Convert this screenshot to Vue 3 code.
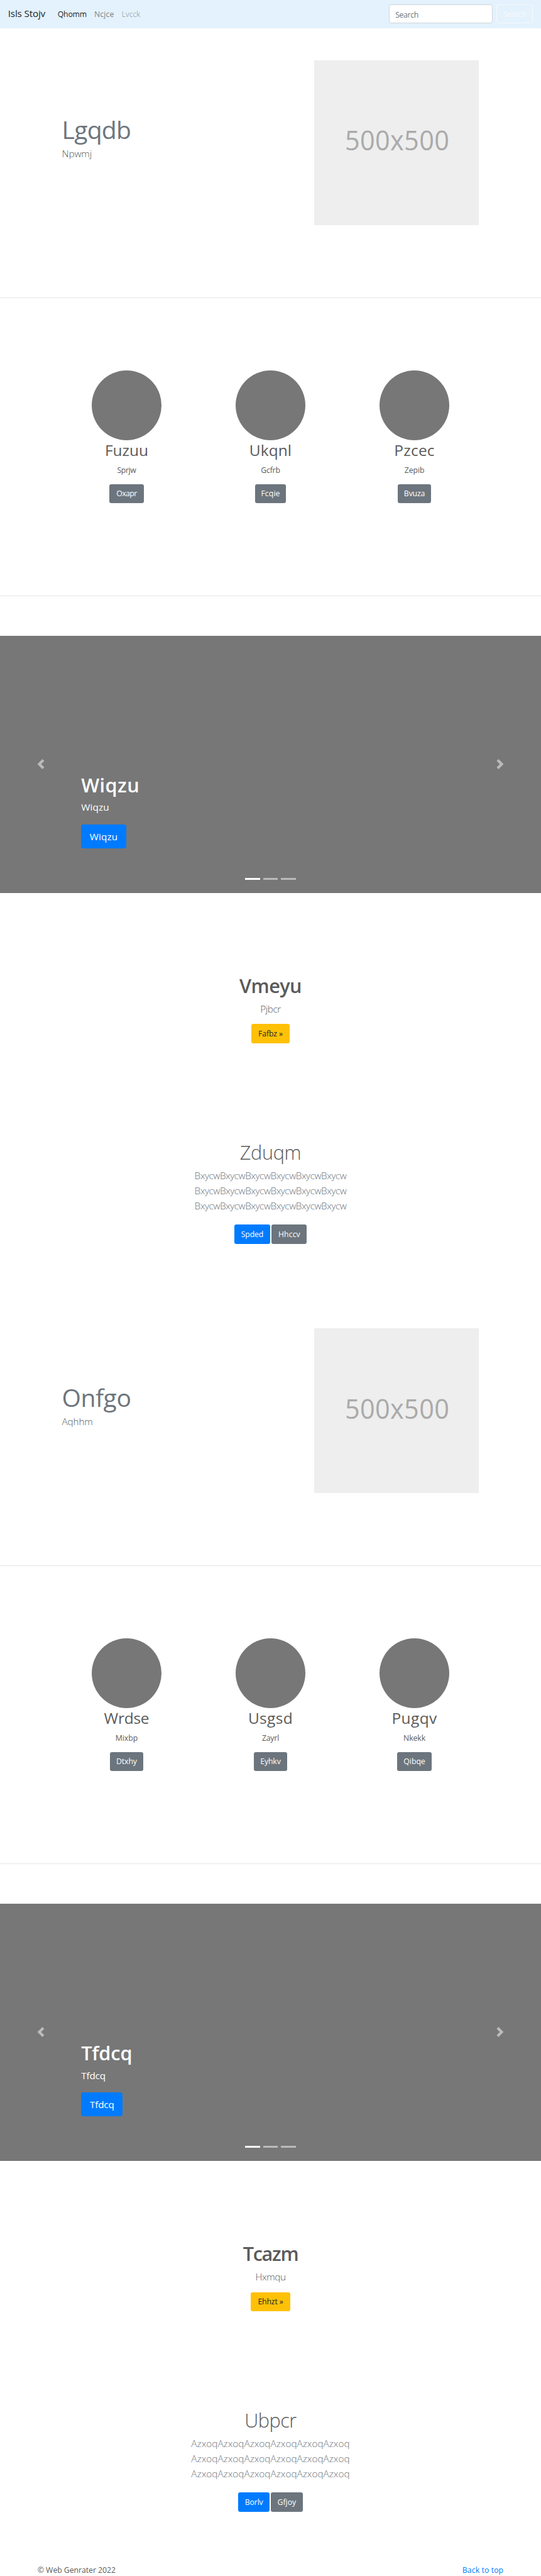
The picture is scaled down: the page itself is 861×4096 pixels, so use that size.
<script setup>
// Each label carries the width its glyphs should span; tracking is adjusted to reach it.
const vFit = {
  mounted(el, { value }) {
    const text = el.textContent.trim()
    const ctx = document.createElement('canvas').getContext('2d')
    const cs = getComputedStyle(el)
    ctx.font = `${cs.fontWeight} ${parseFloat(cs.fontSize)}px ${cs.fontFamily}`
    const m = ctx.measureText(text)
    const ink = m.actualBoundingBoxLeft + m.actualBoundingBoxRight
    el.style.letterSpacing = `${((value - ink) / (text.length - 1)).toFixed(3)}px`
  },
}

const links = [
  { text: 'Qhomm', w: 57, kind: 'active' },
  { text: 'Ncjce', w: 38, kind: 'normal' },
  { text: 'Lvcck', w: 36.5, kind: 'disabled' },
]

const sections = [
  {
    hero: { title: 'Lgqdb', tw: 132.5, lead: 'Npwmj', lw: 57.5 },
    cards: [
      { title: 'Fuzuu', tw: 81.5, sub: 'Sprjw', sw: 38, btn: 'Oxapr', w: 69, bw: 42 },
      { title: 'Ukqnl', tw: 80.5, sub: 'Gcfrb', sw: 38, btn: 'Fcqie', w: 62, bw: 36 },
      { title: 'Pzcec', tw: 77, sub: 'Zepib', sw: 39.5, btn: 'Bvuza', w: 67, bw: 40.5 },
    ],
    slide: { text: 'Wiqzu', tw: 113.5, w: 55, bw: 90 },
    promo: { title: 'Vmeyu', tw: 122.5, lead: 'Pjbcr', lw: 41, btn: 'Fafbz »', w: 76, bw: 48.5 },
    album: {
      title: 'Zduqm', tw: 119, line: 'Bxycw', lw: 303,
      a: 'Spded', aw: 72, atw: 44, b: 'Hhccv', bw: 70, btw: 43,
    },
  },
  {
    hero: { title: 'Onfgo', tw: 134, lead: 'Aqhhm', lw: 61 },
    cards: [
      { title: 'Wrdse', tw: 89, sub: 'Mixbp', sw: 43, btn: 'Dtxhy', w: 67, bw: 40.5 },
      { title: 'Usgsd', tw: 85, sub: 'Zayrl', sw: 33.5, btn: 'Eyhkv', w: 66, bw: 40 },
      { title: 'Pugqv', tw: 87.5, sub: 'Nkekk', sw: 43, btn: 'Qibqe', w: 69, bw: 42.5 },
    ],
    slide: { text: 'Tfdcq', tw: 99, w: 48, bw: 83 },
    promo: { title: 'Tcazm', tw: 109, lead: 'Hxmqu', lw: 58.5, btn: 'Ehhzt »', w: 78, bw: 50 },
    album: {
      title: 'Ubpcr', tw: 101, line: 'Azxoq', lw: 315,
      a: 'Borlv', aw: 62, atw: 35.5, b: 'Gfjoy', bw: 63, btw: 37.5,
    },
  },
]
</script>

<template>
  <div class="page">
    <header class="navbar">
      <a class="brand"><span v-fit="74">Isls Stojv</span></a>
      <nav class="links">
        <a v-for="l in links" :key="l.text" :class="['link', l.kind]"><span v-fit="l.w">{{ l.text }}</span></a>
      </nav>
      <form class="search">
        <div class="field"><span v-fit="46">Search</span></div>
        <div class="go"><span v-fit="46">Search</span></div>
      </form>
    </header>

    <section v-for="s in sections" :key="s.hero.title" class="block">
      <div class="hero">
        <div class="hero-text">
          <h2><span v-fit="s.hero.tw">{{ s.hero.title }}</span></h2>
          <p class="lead"><span v-fit="s.hero.lw">{{ s.hero.lead }}</span></p>
        </div>
        <div class="placeholder"><span v-fit="215">500x500</span></div>
      </div>
      <div class="rule"></div>

      <div class="cards">
        <div v-for="c in s.cards" :key="c.title" class="card">
          <div class="circle"></div>
          <h3><span v-fit="c.tw">{{ c.title }}</span></h3>
          <p><span v-fit="c.sw">{{ c.sub }}</span></p>
          <a class="btn gray" :style="{ width: c.w + 'px' }"><span v-fit="c.bw">{{ c.btn }}</span></a>
        </div>
      </div>
      <div class="rule"></div>

      <div class="carousel">
        <svg class="arrow prev" viewBox="0 0 8 8"><path d="M5.25 0l-4 4 4 4 1.5-1.5-2.5-2.5 2.5-2.5-1.5-1.5z" /></svg>
        <svg class="arrow next" viewBox="0 0 8 8"><path d="M2.75 0l-1.5 1.5 2.5 2.5-2.5 2.5 1.5 1.5 4-4-4-4z" /></svg>
        <div class="caption">
          <h1><span v-fit="s.slide.tw">{{ s.slide.text }}</span></h1>
          <p><span v-fit="s.slide.w">{{ s.slide.text }}</span></p>
          <a class="btn large blue" :style="{ width: s.slide.bw + 'px' }"><span v-fit="s.slide.w">{{ s.slide.text }}</span></a>
        </div>
        <div class="dots"><i class="on"></i><i></i><i></i></div>
      </div>

      <div class="promo">
        <h1><span v-fit="s.promo.tw">{{ s.promo.title }}</span></h1>
        <p class="lead"><span v-fit="s.promo.lw">{{ s.promo.lead }}</span></p>
        <a class="btn yellow" :style="{ width: s.promo.w + 'px' }"><span v-fit="s.promo.bw">{{ s.promo.btn }}</span></a>
      </div>

      <div class="album">
        <h1><span v-fit="s.album.tw">{{ s.album.title }}</span></h1>
        <p v-for="n in 3" :key="n" class="lead muted"><span v-fit="s.album.lw">{{ s.album.line.repeat(6) }}</span></p>
        <div class="actions">
          <a class="btn blue" :style="{ width: s.album.aw + 'px' }"><span v-fit="s.album.atw">{{ s.album.a }}</span></a>
          <a class="btn gray" :style="{ width: s.album.bw + 'px' }"><span v-fit="s.album.btw">{{ s.album.b }}</span></a>
        </div>
      </div>
    </section>

    <footer class="footer">
      <span v-fit="155">© Web Genrater 2022</span>
      <a><span v-fit="80.5">Back to top</span></a>
    </footer>
  </div>
</template>

<style>
body {
  margin: 0;
  background: #fff;
}
</style>

<style scoped>
.page {
  zoom: 0.7975;
  font-family: "Open Sans", "Noto Sans", sans-serif;
  font-size: 15.4px;
  line-height: 24px;
  color: #5a5a5a;
  height: 5136px;
  overflow: hidden;
}
.page * {
  box-sizing: border-box;
}
h1, h2, h3, p {
  margin: 0;
  font-weight: 400;
}
span {
  white-space: nowrap;
}
.navbar {
  height: 56px;
  background: #e3f2fd;
  display: flex;
  align-items: center;
  padding: 0 16px;
}
.brand {
  width: 99px;
  font-size: 19.2px;
  line-height: 30px;
  color: rgba(0, 0, 0, 0.9);
}
.links {
  display: flex;
  gap: 15px;
}
.link.active {
  color: rgba(0, 0, 0, 0.9);
}
.link.normal {
  color: rgba(0, 0, 0, 0.5);
}
.link.disabled {
  color: rgba(0, 0, 0, 0.3);
}
.search {
  margin-left: auto;
  display: flex;
  gap: 8px;
}
.field,
.go {
  height: 38px;
  border-radius: 4px;
  padding: 7px 12px 0;
  border: 1px solid #ced4da;
}
.field {
  width: 207px;
  background: #fff;
  color: #6c757d;
}
.go {
  width: 73px;
  border-color: #f8f9fa;
  color: #f8f9fa;
  padding-top: 6px;
}
.block {
  height: 2528px;
  padding-top: 64px;
}
.hero {
  height: 473px;
  display: flex;
  justify-content: space-between;
  padding: 0 123.6px 0 123.5px;
}
.hero-text {
  padding-top: 113px;
}
.hero h2 {
  font-size: 49px;
  line-height: 50px;
  color: #6c757d;
}
.lead {
  font-size: 19.2px;
  line-height: 30px;
  font-weight: 300;
}
.hero .lead {
  margin-top: 9px;
}
.placeholder {
  width: 329px;
  height: 329px;
  background: #eee;
  color: #aaa;
  font-size: 55px;
  display: flex;
  align-items: center;
  justify-content: center;
  padding: 0 0 9.6px 2px;
}
.placeholder span {
  transform: scaleX(0.944);
}
.rule {
  height: 1px;
  background: #e5e5e5;
}
.cards {
  height: 593px;
  padding: 144px 109px 0;
  display: grid;
  grid-template-columns: repeat(3, 1fr);
}
.card {
  display: flex;
  flex-direction: column;
  align-items: center;
}
.circle {
  width: 140px;
  height: 140px;
  border-radius: 50%;
  background: #777;
}
.card h3 {
  margin-top: 1px;
  font-size: 30.7px;
  line-height: 38px;
}
.card p {
  margin-top: 8.5px;
}
.card .btn {
  margin-top: 15.5px;
}
.btn {
  height: 38px;
  border-radius: 4px;
  display: flex;
  align-items: center;
  justify-content: center;
  color: #fff;
}
.gray {
  background: #6c757d;
}
.blue {
  background: #007bff;
}
.yellow {
  background: #ffc107;
  color: #212529;
}
.large {
  height: 48px;
  border-radius: 5px;
  font-size: 19.2px;
  font-weight: 500;
}
.carousel {
  position: relative;
  margin-top: 80px;
  height: 512px;
  background: #777;
  color: #fff;
}
.arrow {
  position: absolute;
  top: 246px;
  width: 20px;
  height: 20px;
  fill: #fff;
  opacity: 0.5;
}
.prev {
  left: 71px;
}
.next {
  right: 71px;
}
.caption {
  position: absolute;
  left: 162px;
  top: 273px;
}
.caption h1 {
  font-size: 38.4px;
  line-height: 48px;
  font-weight: 600;
}
.caption p {
  margin: 6.6px 0 18.4px;
  font-size: 19.2px;
  line-height: 30px;
  font-weight: 500;
}
.dots {
  position: absolute;
  left: 0;
  right: 0;
  top: 483px;
  display: flex;
  justify-content: center;
  gap: 6px;
}
.dots i {
  width: 30px;
  height: 3px;
  background: #fff;
  opacity: 0.5;
}
.dots .on {
  opacity: 1;
}
.promo,
.album {
  display: flex;
  flex-direction: column;
  align-items: center;
}
.promo {
  padding-top: 160.7px;
}
.promo h1,
.album h1 {
  font-size: 38.4px;
  line-height: 48px;
}
.promo h1 {
  font-weight: 600;
}
.promo .lead {
  margin: 8.9px 0 14.4px;
}
.album {
  padding-top: 193.6px;
}
.album h1 {
  font-weight: 300;
  margin-bottom: 8px;
}
.muted {
  color: #6c757d;
}
.actions {
  margin-top: 22.4px;
  display: flex;
  gap: 3px;
}
.footer {
  display: flex;
  justify-content: space-between;
  padding: 0 75px;
}
.footer a {
  color: #007bff;
}
</style>
